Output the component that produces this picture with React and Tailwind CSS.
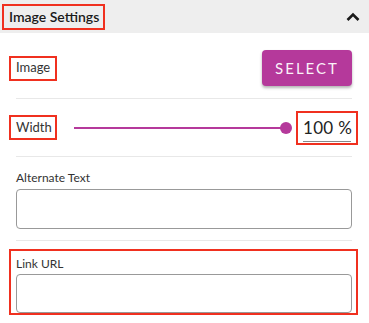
import React from "react";

const RED = "border-2 border-[#f0301f]";

export default function App() {
  return (
    <div className="w-[369px] h-[323px] bg-white overflow-hidden text-[#222]" style={{ fontFamily: "Lato, 'Open Sans', sans-serif" }}>
      <div className="h-[33px] bg-[#eeeeee] flex items-center justify-between pl-[2px] pr-[8px]">
        <span className={`${RED} h-[26px] w-[103px] pl-[5px] flex items-center text-[14px] font-semibold text-[#1a1a1a]`}>Image Settings</span>
        <svg width="14" height="10" viewBox="0 0 14 10" className="mr-[1px]">
          <path d="M1.5 8 L7 2.5 L12.5 8" fill="none" stroke="#1a1a1a" strokeWidth="2.6" />
        </svg>
      </div>
      <div className="px-4">
        <div className="flex items-center justify-between pt-[17px] pb-[12px]">
          <span className={`${RED} -ml-[7px] h-[25px] w-[48px] pl-[5px] flex items-center text-[13px] text-[#333]`}>Image</span>
          <button className="w-[90px] h-[36px] rounded-[4px] bg-[#b5399b] text-white/95 text-[15px] tracking-[2px] shadow-[0_2px_3px_rgba(0,0,0,0.3)] mr-[1px]">
            SELECT
          </button>
        </div>
        <div className="h-px bg-[#e8e8e8] mr-[1px]" />
        <div className="flex items-center h-[57px] -mr-[5px]">
          <span className={`${RED} -ml-[7px] h-[25px] w-[48px] pl-[5px] flex items-center text-[13px] text-[#333] shrink-0`}>Width</span>
          <div className="ml-[17px] w-[218px] shrink-0 relative flex items-center h-[14px]">
            <div className="h-[2px] w-[212px] bg-[#b5399b]" />
            <div className="absolute left-[206px] top-[1px] w-[12px] h-[12px] rounded-full bg-[#b5399b]" />
          </div>
          <div className={`${RED} shrink-0 ml-[4px] w-[62px] h-[34px] flex flex-col pl-[5px] pr-[5px] pt-[4px]`}>
            <span className="text-[17px] leading-[22px] text-[#222] tracking-[0.3px]">100&nbsp;%</span>
            <div className="h-px bg-[#888] mt-[2px]" />
          </div>
        </div>
        <div className="h-px bg-[#e8e8e8] mr-[1px]" />
        <div className="pt-[13px] pb-[11px]">
          <div className="text-[12px] leading-[16px] text-[#333]">Alternate Text</div>
          <div className="mt-[3px] h-[40px] rounded-[4px] border border-[#999] mr-[1px]" />
        </div>
        <div className="h-px bg-[#e8e8e8] mr-[1px]" />
        <div className={`${RED} mt-[8px] -ml-[7px] -mr-[5px] pl-[5px] pr-[3px] pt-[5px] pb-[0px]`}>
          <div className="text-[12px] leading-[16px] text-[#333]">Link URL</div>
          <div className="mt-[2px] h-[39px] rounded-[4px] border border-[#999] mr-[1px]" />
        </div>
      </div>
    </div>
  );
}
